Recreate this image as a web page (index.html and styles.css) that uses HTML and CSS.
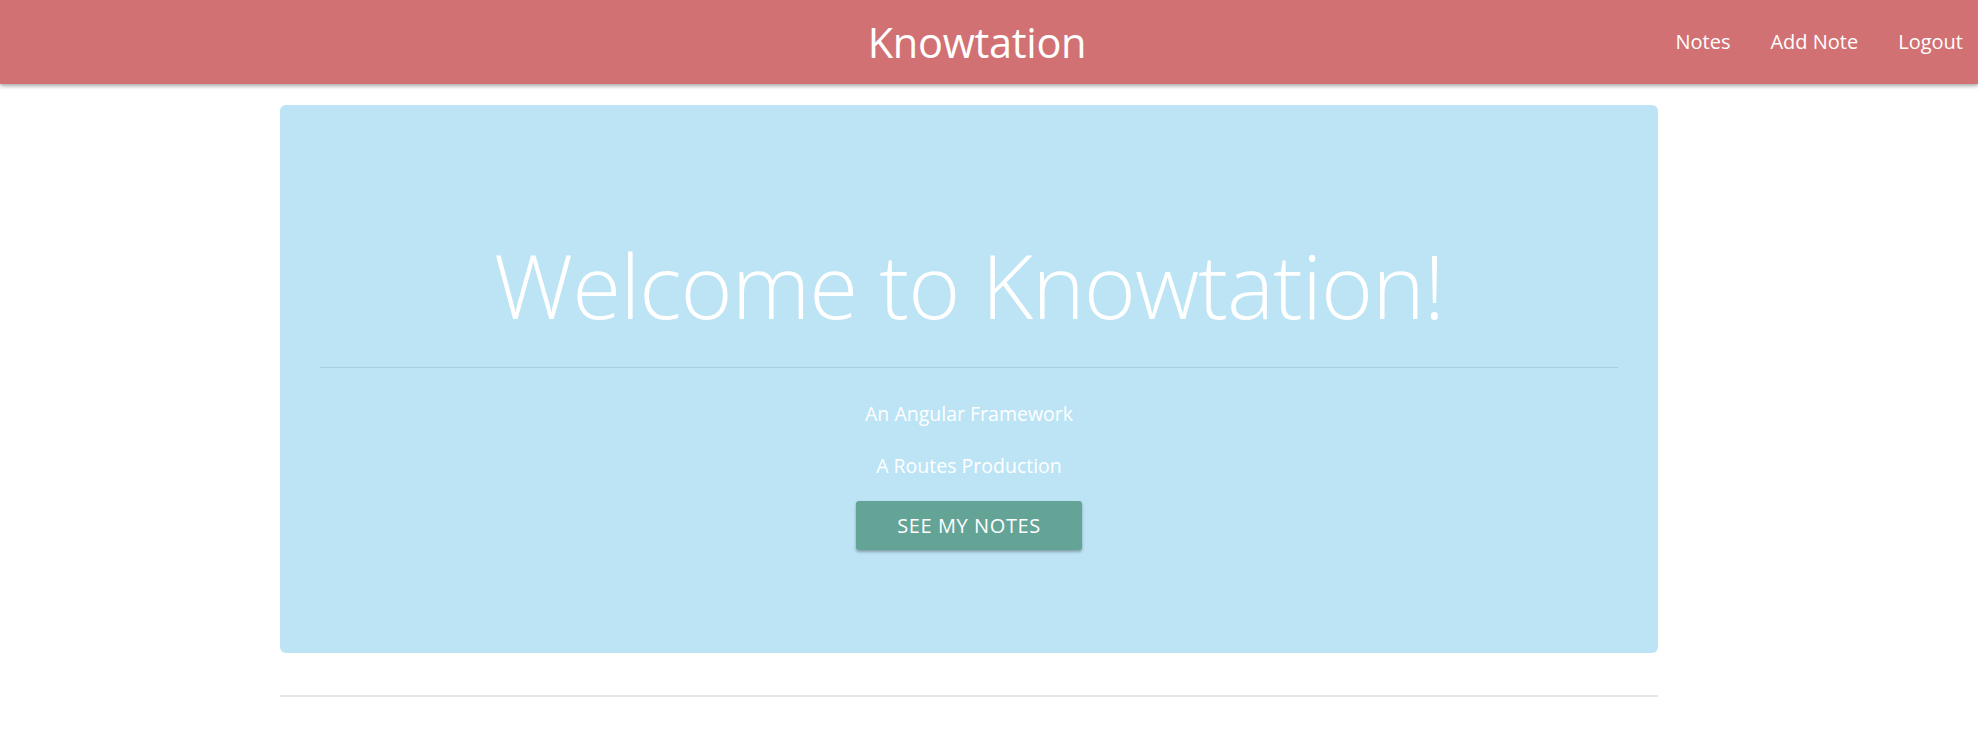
FILE: index.html
```html
<!DOCTYPE html>
<html lang="en">
<head>
<meta charset="utf-8">
<title>Knowtation</title>
<link rel="stylesheet" href="styles.css">
</head>
<body>
<header class="navbar">
  <div class="nav-spacer"></div>
  <a class="brand" href="#">Knowtation</a>
  <nav class="nav-links">
    <a class="nav-link" href="#">Notes</a>
    <a class="nav-link" href="#">Add Note</a>
    <a class="nav-link" href="#">Logout</a>
  </nav>
</header>
<main class="container">
  <section class="jumbotron">
    <h1 class="display">Welcome to Knowtation!</h1>
    <hr class="jumbo-rule">
    <p class="lead">An Angular Framework</p>
    <p class="lead">A Routes Production</p>
    <a class="btn" href="#">SEE MY NOTES</a>
  </section>
  <hr class="page-rule">
</main>
</body>
</html>
```
FILE: styles.css
```css
* { box-sizing: border-box; }
html, body { margin: 0; padding: 0; }
body {
  font-family: "Open Sans", "Noto Sans", "Liberation Sans", sans-serif;
  background: #ffffff;
  color: #ffffff;
  overflow: hidden;
}
a { text-decoration: none; color: inherit; }

.navbar {
  height: 84px;
  background: #d27173;
  display: grid;
  grid-template-columns: 1fr auto 1fr;
  align-items: center;
  box-shadow: 0 2px 4px rgba(0,0,0,0.35);
  position: relative;
  z-index: 1;
}
.brand {
  font-size: 41.5px;
  font-weight: 400;
  color: #fff;
  margin-right: 24px;
  margin-top: 2px;
  line-height: 1;
  letter-spacing: -0.3px;
}
.nav-links {
  display: flex;
  justify-content: flex-end;
  gap: 40px;
  padding-right: 15px;
  margin-top: -2px;
}
.nav-link {
  font-size: 20px;
  color: #fff;
}

.container {
  width: 1378px;
  margin-left: 280px;
  padding-top: 21px;
}
.jumbotron {
  background: #bce4f5;
  border-radius: 6px;
  height: 548px;
  padding: 127px 40px 0;
  display: flex;
  flex-direction: column;
  align-items: center;
}
.display {
  margin: 0;
  font-size: 89px;
  font-weight: 300;
  line-height: 1.2;
  letter-spacing: -1px;
}
.jumbo-rule {
  align-self: stretch;
  border: 0;
  border-top: 1px solid #a4cfe0;
  margin: 28px 0 0;
}
.lead {
  margin: 31px 0 0;
  font-size: 19.5px;
  line-height: 1.5;
}
.lead + .lead { margin-top: 23px; }
.btn {
  margin-top: 21px;
  width: 226px;
  height: 49px;
  background: #63a497;
  border-radius: 3px;
  display: flex;
  align-items: center;
  justify-content: center;
  font-size: 20px;
  letter-spacing: 0.6px;
  box-shadow: 0 2px 3px rgba(0,0,0,0.3);
}
.page-rule {
  border: 0;
  border-top: 2px solid #e6e6e6;
  margin: 42px 0 0;
}
```
